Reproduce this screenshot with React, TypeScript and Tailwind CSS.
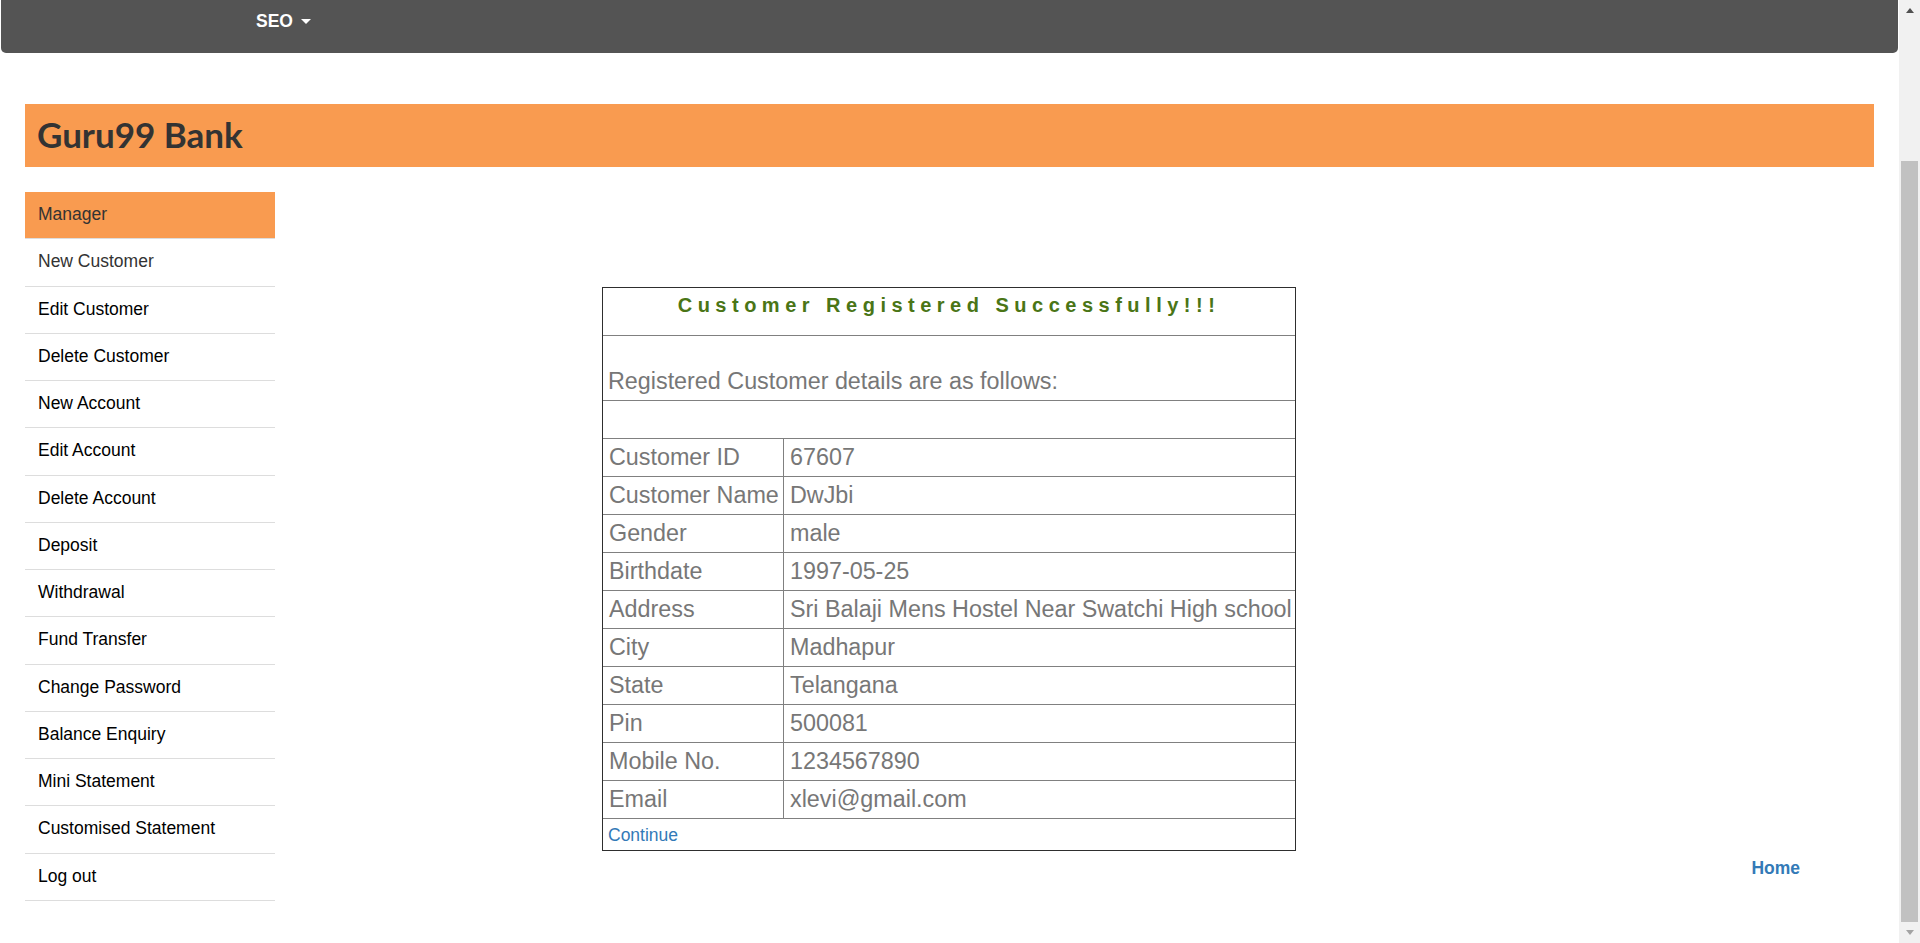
import React from 'react'

const menu = [
  'Manager',
  'New Customer',
  'Edit Customer',
  'Delete Customer',
  'New Account',
  'Edit Account',
  'Delete Account',
  'Deposit',
  'Withdrawal',
  'Fund Transfer',
  'Change Password',
  'Balance Enquiry',
  'Mini Statement',
  'Customised Statement',
  'Log out',
]

const details: [string, string][] = [
  ['Customer ID', '67607'],
  ['Customer Name', 'DwJbi'],
  ['Gender', 'male'],
  ['Birthdate', '1997-05-25'],
  ['Address', 'Sri Balaji Mens Hostel Near Swatchi High school'],
  ['City', 'Madhapur'],
  ['State', 'Telangana'],
  ['Pin', '500081'],
  ['Mobile No.', '1234567890'],
  ['Email', 'xlevi@gmail.com'],
]

export default function App() {
  return (
    <div className="flex h-[943px] w-full overflow-hidden bg-white font-['Liberation_Sans',Arial,sans-serif]">
      <div className="min-w-0 flex-1">
        {/* top navbar */}
        <nav className="mx-[1px] h-[53px] rounded-b-[5px] bg-[#545454] pl-[255px] pt-[11px]">
          <a href="#" className="flex items-center gap-[8px] text-[17.5px] font-bold leading-[20px] text-white">
            SEO
            <span className="h-0 w-0 border-x-[5px] border-t-[5px] border-x-transparent border-t-white" />
          </a>
        </nav>

        {/* banner */}
        <header className="mx-[25px] mt-[51px] flex h-[63px] items-center bg-[#f99b50] pb-[2px] pl-[12px]">
          <h1 className="font-['Lato',sans-serif] text-[35px] font-bold leading-none text-[#333]">Guru99 Bank</h1>
        </header>

        <div className="mt-[25px] flex px-[25px]">
          {/* side menu */}
          <ul className="w-[250px] shrink-0">
            {menu.map((item, i) => (
              <li
                key={item}
                className={
                  i === 0
                    ? 'flex h-[47.27px] items-center border-b border-[#ddd] bg-[#f99b50] pb-[2px] pl-[13px] text-[17.5px] text-[#333]'
                    : i === 1
                      ? 'flex h-[47.27px] items-center border-b border-[#ddd] pb-[2px] pl-[13px] text-[17.5px] text-[#333]'
                      : 'flex h-[47.27px] items-center border-b border-[#ddd] pb-[2px] pl-[13px] text-[17.5px] text-black'
                }
              >
                {item}
              </li>
            ))}
          </ul>

          {/* content */}
          <div className="flex min-w-0 flex-1 flex-col">
            <div className="ml-[327px] mt-[95px] w-[694px] border border-[#2e2e2e] text-[23.33px] leading-[26.8px] text-[#777]">
              <div className="h-[48px] border-b border-[#808080] pt-[6px] text-center text-[20px] font-bold leading-[23px] tracking-[5.5px] text-[#4a7516]">
                Customer Registered Successfully!!!
              </div>
              <div className="flex h-[65px] items-end border-b border-[#808080] pb-[5px] pl-[5px]">
                Registered Customer details are as follows:
              </div>
              <div className="h-[38px] border-b border-[#808080]" />
              {details.map(([label, value]) => (
                <div key={label} className="grid h-[38px] grid-cols-[181px_1fr] border-b border-[#808080]">
                  <div className="flex items-center border-r border-[#808080] pl-[6px] whitespace-nowrap">{label}</div>
                  <div className="flex items-center pl-[6px] whitespace-nowrap">{value}</div>
                </div>
              ))}
              <div className="flex h-[31px] items-center pl-[5px]">
                <a href="#" className="text-[17.5px] leading-[20px] text-[#337ab7]">Continue</a>
              </div>
            </div>

            <div className="mt-[7px] flex justify-end pr-[74px]">
              <a href="#" className="text-[17.5px] font-bold leading-[20px] text-[#337ab7]">Home</a>
            </div>
          </div>
        </div>
      </div>

      {/* window scrollbar */}
      <div className="flex w-[21px] shrink-0 flex-col bg-[#f1f1f1]">
        <div className="flex h-[21px] items-center justify-center">
          <span className="h-0 w-0 border-x-[4px] border-b-[5px] border-x-transparent border-b-[#505050]" />
        </div>
        <div className="mx-[2px] mt-[140px] h-[761px] bg-[#c1c1c1]" />
        <div className="flex flex-1 items-center justify-center">
          <span className="h-0 w-0 border-x-[4px] border-t-[5px] border-x-transparent border-t-[#a3a3a3]" />
        </div>
      </div>
    </div>
  )
}
